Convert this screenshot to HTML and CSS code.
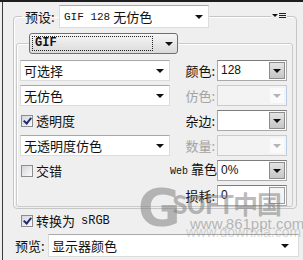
FILE: index.html
```html
<!DOCTYPE html>
<html lang="zh-CN">
<head>
  <meta charset="UTF-8">
  <title>存储为 Web 所用格式 - 优化设置</title>
  <link rel="stylesheet" href="styles.css">
</head>
<body>

  <div class="frame">
    <fieldset class="panel">
      <legend class="preset">
        <span class="lbl">预设:</span>
        <div class="select preset-select"><span class="mono">GIF 128</span>&nbsp;无仿色<i class="tri"></i></div>
      </legend>

      <fieldset class="group">
        <legend class="format-legend">
          <div class="format"><span class="focus mono">GIF</span><i class="tri"></i></div>
        </legend>

        <div class="grid">
          <div class="select">可选择<i class="tri"></i></div>
          <span class="flabel">颜色:</span>
          <div class="field"><span class="val">128</span><span class="spin"><i class="tri"></i></span></div>

          <div class="select">无仿色<i class="tri"></i></div>
          <span class="flabel off">仿色:</span>
          <div class="field off"><span class="val"></span><span class="spin"><i class="tri"></i></span></div>

          <label class="check"><span class="box on"></span>透明度</label>
          <span class="flabel">杂边:</span>
          <div class="field"><span class="val"></span><span class="spin"><i class="tri"></i></span></div>

          <div class="select">无透明度仿色<i class="tri"></i></div>
          <span class="flabel off">数量:</span>
          <div class="field off"><span class="val"></span><span class="spin"><i class="tri"></i></span></div>

          <label class="check"><span class="box"></span>交错</label>
          <span class="flabel"><span class="mono web">Web</span> 靠色:</span>
          <div class="field"><span class="val">0%</span><span class="spin"><i class="tri"></i></span></div>

          <span></span>
          <span class="flabel">损耗:</span>
          <div class="field"><span class="val">0</span><span class="spin square"></span></div>
        </div>
      </fieldset>
    </fieldset>

    <!-- panel flyout menu, sits on the panel border -->
    <div class="panel-menu">
      <i class="tri tri-small"></i>
      <span class="lines"><b></b><b></b><b></b></span>
    </div>

    <label class="check srgb"><span class="box on"></span>转换为 <span class="mono">sRGB</span></label>

    <div class="preview-row">
      <span class="lbl">预览:</span>
      <div class="select preview-select">显示器颜色<i class="tri"></i></div>
    </div>

    <div class="watermark">
      <span class="wm-logo">G</span>
      <span class="wm-name">SOFT中国</span>
      <span class="wm-url">www.861ppt.com</span>
      <span class="wm-url2">www.downxia.com</span>
    </div>
  </div>

</body>
</html>
```

FILE: styles.css
```css
body {
  margin: 0;
  background: #efefef;
  font-family: "Noto Sans CJK SC", "Liberation Sans", sans-serif;
  font-size: 13px;
  color: #111;
}
.frame {
  position: relative;
  height: 258px;
  border-top: 2px solid #1e1e1e;
  overflow: hidden;
}
.frame::before {
  content: "";
  position: absolute;
  left: 2px;
  top: 0;
  bottom: 0;
  border-left: 1px solid #3a3a3a;
}
.mono {
  font-family: "Liberation Mono", monospace;
  font-size: 11px;
}
.tri {
  display: inline-block;
  width: 0;
  height: 0;
  border-left: 4px solid transparent;
  border-right: 4px solid transparent;
  border-top: 4px solid #111;
}

/* outer panel */
.panel {
  margin: 3px 6px 0 13px;
  padding: 5px 3px 1px 2px;
  border: 1px solid #c6c6c6;
  border-radius: 4px;
  box-shadow: inset 1px 1px 0 #fff;
}
.preset {
  display: flex;
  align-items: center;
  margin-left: 6px;
  padding: 0 0 0 3px;
  height: 23px;
}
.lbl {
  width: 34px;
  line-height: 16px;
}
.select {
  display: flex;
  align-items: center;
  justify-content: space-between;
  box-sizing: border-box;
  height: 21px;
  padding: 0 5px 0 3px;
  background: #fff;
  border: 1px solid #dcdcdc;
  border-top-color: #a8a8a8;
  line-height: 16px;
  white-space: nowrap;
}
.select .tri {
  margin-left: auto;
}
.preset-select {
  width: 150px;
  height: 23px;
  padding-left: 4px;
}
.panel-menu {
  position: absolute;
  top: 11px;
  left: 271px;
  display: flex;
  align-items: center;
  gap: 1px;
  padding: 0 1px;
  background: #efefef;
}
.tri-small {
  border-left-width: 3px;
  border-right-width: 3px;
  border-top-width: 3px;
}
.lines {
  display: flex;
  flex-direction: column;
  gap: 1px;
}
.lines b {
  display: block;
  width: 7px;
  height: 1px;
  background: #222;
}

/* inner group */
.group {
  margin: 0;
  padding: 6px 2px 0 3px;
  border: 1px solid #cbcbcb;
  border-radius: 3px;
  box-shadow: inset 1px 1px 0 #fff;
}
.format-legend {
  margin-left: 9px;
  padding: 0;
}
.format {
  display: flex;
  align-items: center;
  box-sizing: border-box;
  width: 149px;
  height: 21px;
  padding: 0 4px 0 2px;
  border: 1px solid #6f6f6f;
  border-radius: 3px;
  background: linear-gradient(#f6f6f6, #dadada);
}
.focus {
  flex: 1;
  margin-right: 12px;
  padding-left: 2px;
  height: 13px;
  line-height: 13px;
  border: 1px dotted #222;
  font-size: 12px;
  font-weight: bold;
}

.grid {
  display: grid;
  grid-template-columns: 150px 47px 70px;
  grid-template-rows: repeat(6, 21px);
  row-gap: 4px;
  align-items: center;
}
.flabel {
  text-align: right;
  padding-right: 2px;
  line-height: 16px;
  white-space: nowrap;
}
.flabel.off {
  color: #a3a3a3;
}
.web {
  font-size: 10px;
}
.field {
  display: flex;
  box-sizing: border-box;
  height: 21px;
  background: #fff;
  border: 1px solid #a9a9a9;
  border-top-color: #7c7c7c;
}
.val {
  flex: 1;
  padding-left: 3px;
  font-family: "Liberation Sans", sans-serif;
  font-size: 12px;
  line-height: 18px;
}
.spin {
  display: flex;
  align-items: center;
  justify-content: center;
  width: 14px;
  margin: 1px;
  border: 1px solid #8c8c8c;
  background: linear-gradient(#e4e4e4, #c6c6c6);
}
.spin.square {
  background: #f4f4f4;
  border-color: #9c9c9c;
}
.field.off {
  background: #f3f3f3;
  border-color: #bccde6;
}
.field.off .spin {
  background: #fafafa;
  border-color: #f3f3f3;
}
.field.off .tri {
  border-top-color: #b4b4b4;
}

/* checkboxes */
.check {
  display: flex;
  align-items: center;
  gap: 3px;
  padding-left: 1px;
  line-height: 16px;
}
.box {
  position: relative;
  box-sizing: border-box;
  width: 12px;
  height: 12px;
  border: 1px solid #8d8d8d;
  background: linear-gradient(135deg, #d4d4dc, #fbfbfb);
}
.box.on::after {
  content: "";
  position: absolute;
  left: 3px;
  top: 0;
  width: 3px;
  height: 6px;
  border: solid #1f2b73;
  border-width: 0 2px 2px 0;
  transform: rotate(40deg);
}
.srgb {
  margin: 5px 0 0 20px;
  height: 14px;
}
.srgb .mono {
  margin-left: 3px;
  font-size: 12px;
}

/* preview */
.preview-row {
  display: flex;
  align-items: center;
  margin: 6px 0 0 15px;
}
.preview-row .lbl {
  width: 33px;
}
.preview-select {
  width: 251px;
  height: 23px;
  padding-right: 9px;
}

/* site watermark over the bottom right */
.watermark {
  position: absolute;
  left: 138px;
  top: 178px;
  width: 165px;
  height: 65px;
  color: rgba(120, 120, 120, 0.5);
  pointer-events: none;
}
.wm-logo {
  position: absolute;
  left: 0;
  top: 2px;
  font-family: "DejaVu Sans", sans-serif;
  font-size: 52px;
  font-weight: bold;
  line-height: 52px;
}
.wm-name {
  position: absolute;
  left: 34px;
  top: 8px;
  font-size: 25px;
  font-weight: bold;
  line-height: 30px;
  letter-spacing: -1px;
}
.wm-url {
  position: absolute;
  left: 52px;
  top: 36px;
  font-family: "Liberation Sans", sans-serif;
  font-size: 15px;
  line-height: 16px;
}
.wm-url2 {
  position: absolute;
  left: 48px;
  top: 45px;
  font-family: "Liberation Sans", sans-serif;
  font-size: 14px;
  line-height: 14px;
  color: rgba(120, 120, 120, 0.3);
}
```
